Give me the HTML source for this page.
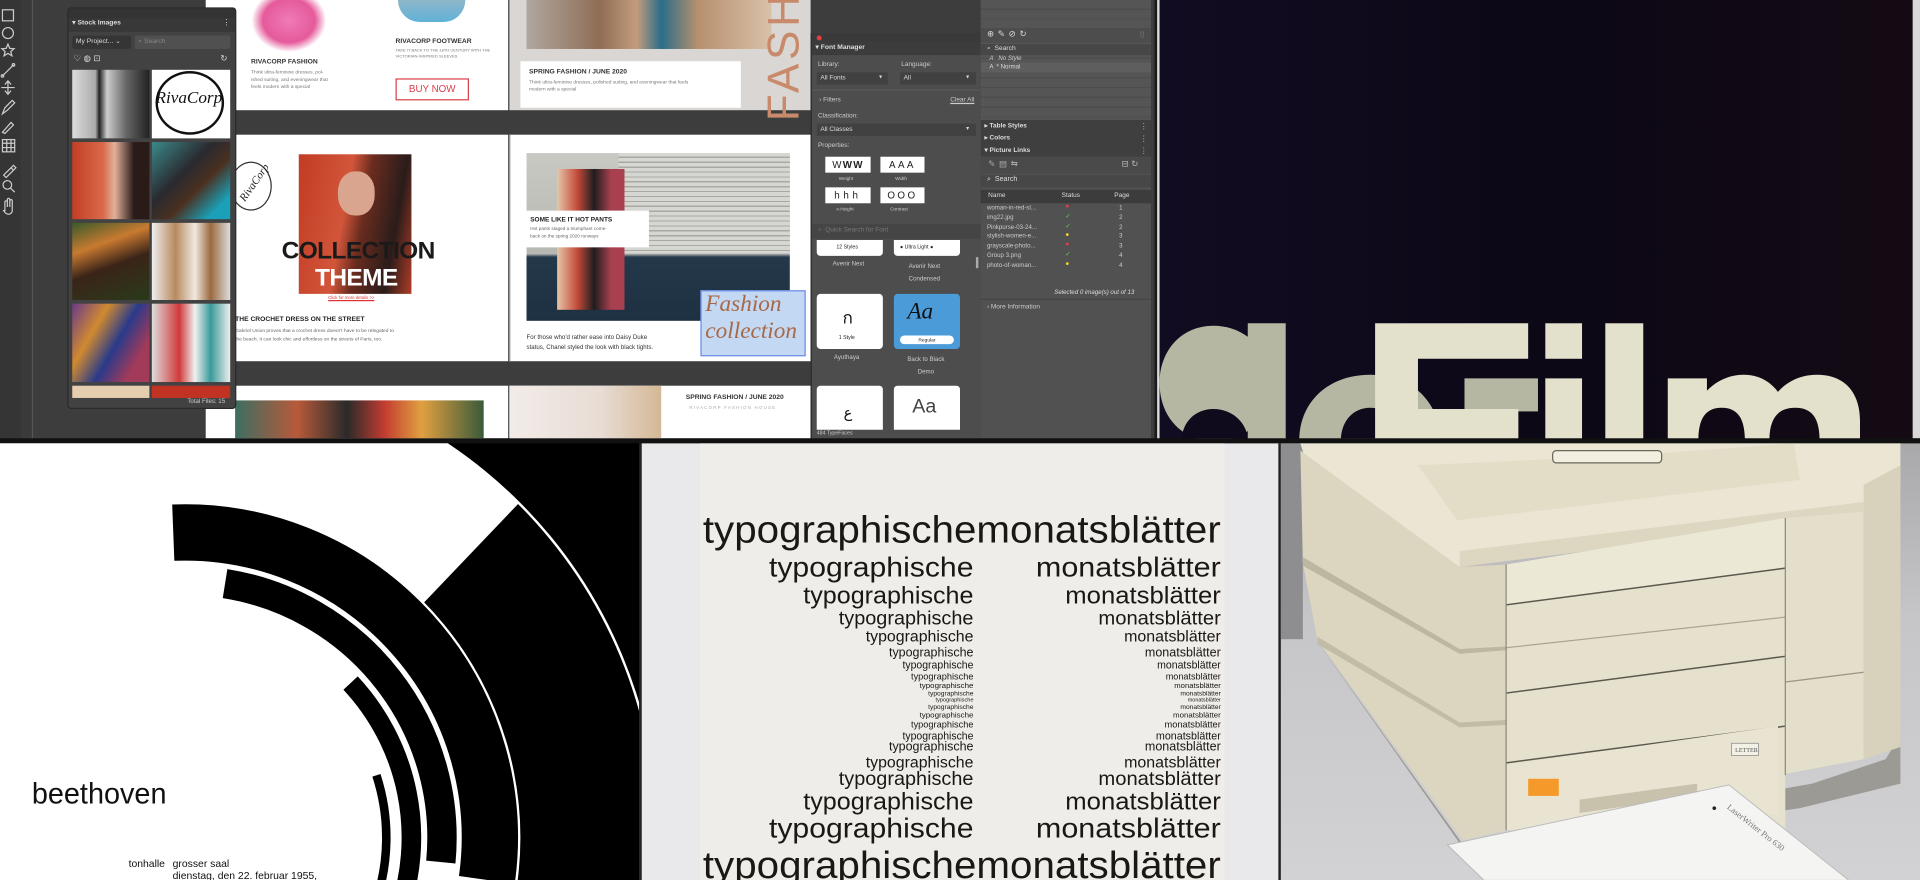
<!DOCTYPE html>
<html><head><meta charset="utf-8">
<style>
html,body{margin:0;padding:0;width:1920px;height:880px;overflow:hidden;background:#121212;}
.s{position:absolute;left:0;top:0;width:1568px;height:719px;overflow:hidden;transform:scale(1.22449);transform-origin:0 0;font-family:"Liberation Sans",sans-serif;}
.a{position:absolute;}
.t{position:absolute;white-space:nowrap;}
.w{color:#ddd;}
</style></head><body>
<div class="s">
<!-- ===== TOP LEFT APP ===== -->
<div class="a" style="left:0;top:0;width:943px;height:358px;background:#3d3d3d;overflow:hidden">
  <div class="a" style="left:0;top:0;width:17px;height:358px;background:#353535"></div>
  <div class="a" style="left:17px;top:0;width:9px;height:358px;background:#3a3a3a;border-right:1px solid #555"></div>
  <svg class="a" style="left:0;top:0" width="26" height="180" fill="none" stroke="#ccc" stroke-width="1">
    <rect x="2" y="8" width="9" height="9"/>
    <circle cx="6.5" cy="27" r="4.5"/>
    <path d="M6.5 36l1.5 3.5 3.5.3-2.7 2.3.9 3.5-3.2-2-3.2 2 .9-3.5-2.7-2.3 3.5-.3z"/>
    <path d="M2 62l9-9"/><circle cx="2" cy="62" r="1"/><circle cx="11" cy="53" r="1"/>
    <path d="M6.5 66v11M1 71.5h11M4 69l2.5-3 2.5 3M4 74l2.5 3 2.5-3"/>
    <path d="M2 93l2-5 6-6 2 2-6 6z"/>
    <path d="M2 108l7-8 2 2-7 7z"/>
    <rect x="2" y="114" width="10" height="10"/><path d="M2 117h10M2 120.5h10M5.5 114v10M9 114v10"/>
    <path d="M3 143l6-6 2 2-6 6zM9 137l2-2 2 2-2 2"/>
    <circle cx="6" cy="151" r="3.5"/><path d="M8.5 153.5l3.5 3.5"/>
    <path d="M4 172v-7a1 1 0 012 0v4-6a1 1 0 012 0v6-5a1 1 0 012 0v8c0 2-2 3-3 3s-3-1-4-3z"/>
  </svg>
  <div class="a" style="left:168px;top:0;width:247px;height:90px;background:#fff"></div>
  <div class="a" style="left:416px;top:0;width:246px;height:90px;background:#d9d6d3"></div>
  <div class="a" style="left:206px;top:0;width:60px;height:42px;background:radial-gradient(ellipse at 50% 40%,#f07ab8,#e55a9a 50%,#fff 72%)"></div>
  <div class="a" style="left:325px;top:0;width:55px;height:18px;background:linear-gradient(#8fb6c9,#5fb2d8);border-radius:0 0 20px 20px"></div>
  <div class="t" style="left:205px;top:48px;font-size:5.5px;color:#333;font-weight:bold">RIVACORP FASHION</div>
  <div class="t" style="left:205px;top:56px;font-size:4px;color:#777;line-height:6px">Think ultra-feminine dresses, pol-<br>ished suiting, and eveningwear that<br>feels modern with a special</div>
  <div class="t" style="left:323px;top:31px;font-size:5.5px;color:#333;font-weight:bold">RIVACORP FOOTWEAR</div>
  <div class="t" style="left:323px;top:39px;font-size:3.3px;color:#777;line-height:4.5px">TAKE IT BACK TO THE 18TH CENTURY WITH THE<br>VICTORIAN-INSPIRED SLEEVES</div>
  <div class="a" style="left:323px;top:64px;width:58px;height:16px;border:1.3px solid #d9404a;color:#d9404a;font-size:8px;text-align:center;line-height:16px">BUY NOW</div>
  <div class="a" style="left:430px;top:0;width:200px;height:40px;background:linear-gradient(90deg,#b0a79f,#8f6d55 30%,#c49c7c 45%,#2a6d8a 55%,#b7906d 70%,#d8c2aa)"></div>
  <div class="a" style="left:425px;top:50px;width:180px;height:38px;background:#fff"></div>
  <div class="t" style="left:432px;top:56px;font-size:5.5px;color:#333;font-weight:bold">SPRING FASHION / JUNE 2020</div>
  <div class="t" style="left:432px;top:64px;font-size:4px;color:#777;line-height:6px">Think ultra-feminine dresses, polished suiting, and eveningwear that feels<br>modern with a special</div>
  <div class="t" style="left:640px;top:46px;font-size:36px;color:#c88a6a;transform:translate(-50%,-50%) rotate(-90deg);letter-spacing:3px;font-weight:300">FASH</div>
  <div class="a" style="left:168px;top:110px;width:247px;height:185px;background:#fff"></div>
  <div class="a" style="left:416px;top:110px;width:246px;height:185px;background:#fff;border-left:1px solid #bbb"></div>
  <div class="a" style="left:188px;top:132px;width:32px;height:38px;border:1.5px solid #333;border-radius:50%"></div>
  <div class="t" style="left:190px;top:144px;font-size:9px;font-style:italic;font-family:'Liberation Serif',serif;transform:rotate(-55deg);color:#222">RivaCorp</div>
  <div class="a" style="left:244px;top:126px;width:92px;height:114px;background:linear-gradient(100deg,#c13c24,#d2553a 40%,#6a2c1f 55%,#2a1c1a 80%,#b03c28)"></div>
  <div class="a" style="left:276px;top:140px;width:30px;height:36px;background:#d9a58e;border-radius:45%"></div>
  <div class="t" style="left:230px;top:194px;width:122px;text-align:center;font-size:20px;font-weight:bold;color:#1a1a1a;letter-spacing:-.5px">COLLECTION</div>
  <div class="t" style="left:230px;top:216px;width:122px;text-align:center;font-size:20px;font-weight:bold;color:#fff;letter-spacing:-.5px">THEME</div>
  <div class="t" style="left:268px;top:241px;font-size:3.5px;color:#d33;text-decoration:underline">Click for more details &gt;&gt;</div>
  <div class="t" style="left:192px;top:258px;font-size:5.5px;color:#222;font-weight:bold">THE CROCHET DRESS ON THE STREET</div>
  <div class="t" style="left:192px;top:266px;font-size:4px;color:#666;line-height:7px">Gabriel Union proves that a crochet dress doesn't have to be relegated to<br>the beach. It can look chic and effortless on the streets of Paris, too.</div>
  <div class="a" style="left:430px;top:125px;width:215px;height:137px;background:linear-gradient(180deg,#c9c9c4 0,#b8b8b2 60%,#23384a 62%,#1e3142 100%)"></div>
  <div class="a" style="left:505px;top:125px;width:140px;height:82px;background:repeating-linear-gradient(180deg,#d6d6d2 0 3px,#a9a9a4 3px 4px)"></div>
  <div class="a" style="left:455px;top:138px;width:55px;height:115px;background:linear-gradient(90deg,#e6c6a8,#c44a3a 30%,#1e1e1e 55%,#a84050 80%)"></div>
  <div class="a" style="left:430px;top:172px;width:100px;height:30px;background:#fff"></div>
  <div class="t" style="left:433px;top:177px;font-size:5.3px;color:#222;font-weight:bold">SOME LIKE IT HOT PANTS</div>
  <div class="t" style="left:433px;top:184px;font-size:3.8px;color:#666;line-height:6px">Hot pants staged a triumphant come-<br>back on the spring 2020 runways</div>
  <div class="a" style="left:572px;top:237px;width:84px;height:52px;background:#c3d8f3;border:1px solid #6b8ce8"></div>
  <div class="t" style="left:576px;top:238px;font-size:19px;font-style:italic;font-family:'Liberation Serif',serif;color:#a86848;line-height:22px">Fashion<br>collection</div>
  <div class="t" style="left:430px;top:272px;font-size:5px;color:#333;line-height:8px">For those who'd rather ease into Daisy Duke<br>status, Chanel styled the look with black tights.</div>
  <div class="a" style="left:168px;top:315px;width:247px;height:43px;background:#fff"></div>
  <div class="a" style="left:416px;top:315px;width:246px;height:43px;background:#fff"></div>
  <div class="a" style="left:192px;top:327px;width:203px;height:31px;background:linear-gradient(90deg,#3c6e62,#b85a3a 25%,#2a2a2a 45%,#c23c30 60%,#e0a040 75%,#3a5a3a)"></div>
  <div class="a" style="left:416px;top:315px;width:124px;height:43px;background:linear-gradient(90deg,#f2ece8,#e8dcd4 60%,#d4b896)"></div>
  <div class="t" style="left:560px;top:322px;font-size:5.5px;color:#333;font-weight:bold">SPRING FASHION / JUNE 2020</div>
  <div class="t" style="left:563px;top:331px;font-size:3.6px;color:#aaa;letter-spacing:1px">RIVACORP FASHION HOUSE</div>
  <div class="a" style="left:55px;top:6px;width:136px;height:326px;background:#424242;border:1px solid #2a2a2a;border-radius:3px;overflow:hidden">
    <div class="a" style="left:0;top:0;width:136px;height:8px;background:#333"></div>
    <div class="a" style="left:0;top:8px;width:136px;height:11px;background:#383838"></div>
    <div class="t w" style="left:3px;top:9px;font-size:5.5px;font-weight:bold">▾ Stock Images</div>
    <div class="t w" style="left:126px;top:8px;font-size:6px">⋮</div>
    <div class="a" style="left:3px;top:22px;width:48px;height:11px;background:#353535;border-radius:2px"></div>
    <div class="t w" style="left:6px;top:24px;font-size:5.5px">My Project... ⌄</div>
    <div class="a" style="left:54px;top:22px;width:78px;height:11px;background:#505050;border-radius:2px"></div>
    <div class="t" style="left:57px;top:24px;font-size:5.5px;color:#888">⌕ Search</div>
    <div class="t w" style="left:4px;top:37px;font-size:7px">♡ ◍ ⊡</div>
    <div class="t w" style="left:124px;top:37px;font-size:7px">↻</div>
    <div class="a" style="left:3px;top:50px;width:63px;height:56px;background:linear-gradient(90deg,#ddd,#aaa 30%,#222 35%,#ccc 45%,#666 70%,#222)"></div>
    <div class="a" style="left:68px;top:50px;width:64px;height:56px;background:#fff"></div>
    <div class="a" style="left:71px;top:51px;width:56px;height:52px;border:2px solid #111;border-radius:50%;box-sizing:border-box"></div>
    <div class="t" style="left:71px;top:66px;font-size:14px;font-style:italic;font-family:'Liberation Serif',serif;color:#111">RivaCorp</div>
    <div class="a" style="left:3px;top:109px;width:63px;height:63px;background:linear-gradient(90deg,#c33e26,#d96a4a 40%,#e2b09a 55%,#2a1a18 80%)"></div>
    <div class="a" style="left:68px;top:109px;width:64px;height:63px;background:linear-gradient(135deg,#3a8a8a,#2a2a30 40%,#4a3020 60%,#1aa0b8 85%)"></div>
    <div class="a" style="left:3px;top:175px;width:63px;height:63px;background:linear-gradient(160deg,#3a5a2a,#c87a30 30%,#3a2418 55%,#2a3a1a)"></div>
    <div class="a" style="left:68px;top:175px;width:64px;height:63px;background:linear-gradient(90deg,#eee,#b88a60 30%,#f0e8e0 55%,#9a6a40 75%,#ddd)"></div>
    <div class="a" style="left:3px;top:241px;width:63px;height:64px;background:linear-gradient(120deg,#6a3a8a,#d08a30 30%,#2a3a8a 55%,#a23a5a 80%)"></div>
    <div class="a" style="left:68px;top:241px;width:64px;height:64px;background:linear-gradient(90deg,#ddd,#d03a3a 35%,#f0f0f0 55%,#3a9a9a 75%,#eee)"></div>
    <div class="a" style="left:3px;top:308px;width:63px;height:10px;background:#e6cdb0"></div>
    <div class="a" style="left:68px;top:308px;width:64px;height:10px;background:#c23222"></div>
    <div class="t" style="left:97px;top:318px;font-size:5px;color:#ccc">Total Files: 15</div>
  </div>
  <div class="a" style="left:662px;top:27px;width:138px;height:331px;background:#4d4d4d;border-left:1px solid #2a2a2a">
    <div class="a" style="left:0;top:0;width:138px;height:8px;background:#3a3a3a"></div>
    <div class="a" style="left:4px;top:2px;width:4px;height:4px;border-radius:50%;background:#e04040"></div>
    <div class="a" style="left:0;top:8px;width:138px;height:10px;background:#3c3c3c"></div>
    <div class="t w" style="left:3px;top:9px;font-size:5.5px;font-weight:bold">▾ Font Manager</div>
    <div class="t" style="left:5px;top:23px;font-size:5.3px;color:#ccc">Library:</div>
    <div class="t" style="left:73px;top:23px;font-size:5.3px;color:#ccc">Language:</div>
    <div class="a" style="left:4px;top:32px;width:58px;height:10px;background:#414141"></div>
    <div class="t" style="left:7px;top:34px;font-size:5.3px;color:#ddd">All Fonts</div><div class="t" style="left:55px;top:33px;font-size:5px;color:#ddd">▾</div>
    <div class="a" style="left:72px;top:32px;width:62px;height:10px;background:#414141"></div>
    <div class="t" style="left:75px;top:34px;font-size:5.3px;color:#ddd">All</div><div class="t" style="left:126px;top:33px;font-size:5px;color:#ddd">▾</div>
    <div class="a" style="left:0;top:46px;width:138px;height:1px;background:#5a5a5a"></div>
    <div class="t" style="left:6px;top:52px;font-size:5.3px;color:#ccc">› Filters</div>
    <div class="t" style="left:113px;top:52px;font-size:5.3px;color:#ccc;text-decoration:underline">Clear All</div>
    <div class="t" style="left:5px;top:65px;font-size:5.3px;color:#ccc">Classification:</div>
    <div class="a" style="left:4px;top:74px;width:130px;height:10px;background:#414141"></div>
    <div class="t" style="left:7px;top:76px;font-size:5.3px;color:#ddd">All Classes</div><div class="t" style="left:126px;top:75px;font-size:5px;color:#ddd">▾</div>
    <div class="t" style="left:5px;top:89px;font-size:5.3px;color:#ccc">Properties:</div>
    <div class="a" style="left:11px;top:101px;width:37px;height:13px;background:#fff;font-size:8px;line-height:13px;text-align:center;letter-spacing:1px;color:#222">W<b>W</b><b>W</b></div>
    <div class="a" style="left:56px;top:101px;width:36px;height:13px;background:#fff;font-size:8px;line-height:13px;text-align:center;letter-spacing:2px;color:#222">AAA</div>
    <div class="t" style="left:22px;top:117px;font-size:3.8px;color:#ccc">Weight</div>
    <div class="t" style="left:68px;top:117px;font-size:3.8px;color:#ccc">Width</div>
    <div class="a" style="left:11px;top:126px;width:37px;height:13px;background:#fff;font-size:8px;line-height:13px;text-align:center;letter-spacing:3px;color:#222">hhh</div>
    <div class="a" style="left:56px;top:126px;width:36px;height:13px;background:#fff;font-size:8px;line-height:13px;text-align:center;letter-spacing:2px;color:#222">OOO</div>
    <div class="t" style="left:20px;top:142px;font-size:3.8px;color:#ccc">x-Height</div>
    <div class="t" style="left:64px;top:142px;font-size:3.8px;color:#ccc">Contrast</div>
    <div class="a" style="left:0;top:156px;width:138px;height:12px;background:#454545"></div>
    <div class="t" style="left:5px;top:158px;font-size:5.3px;color:#777">⌕ &nbsp;Quick Search for Font</div>
    <div class="a" style="left:4px;top:169px;width:54px;height:13px;background:#fff;border-radius:0 0 3px 3px"></div>
    <div class="t" style="left:20px;top:172px;font-size:4.3px;color:#222">12 Styles</div>
    <div class="a" style="left:67px;top:169px;width:54px;height:13px;background:#fff;border-radius:0 0 3px 3px"></div>
    <div class="t" style="left:72px;top:172px;font-size:4.3px;color:#222">● Ultra Light ●</div>
    <div class="t" style="left:17px;top:186px;font-size:5px;color:#ccc">Avenir Next</div>
    <div class="t" style="left:79px;top:186px;font-size:5px;color:#ccc;text-align:center;line-height:10px">Avenir Next<br>Condensed</div>
    <div class="a" style="left:134px;top:183px;width:2px;height:9px;background:#aaa"></div>
    <div class="a" style="left:4px;top:213px;width:54px;height:45px;background:#fff;border-radius:3px"></div>
    <div class="t" style="left:25px;top:222px;font-size:14px;color:#111">ก</div>
    <div class="t" style="left:22px;top:246px;font-size:4.3px;color:#222">1 Style</div>
    <div class="a" style="left:67px;top:213px;width:54px;height:45px;background:#4b9bd8;border-radius:3px"></div>
    <div class="t" style="left:78px;top:217px;font-size:19px;font-style:italic;font-family:'Liberation Serif',serif;color:#111">Aa</div>
    <div class="a" style="left:72px;top:247px;width:44px;height:7px;background:#fff;border-radius:4px;font-size:4px;text-align:center;line-height:7px;color:#222">Regular</div>
    <div class="t" style="left:18px;top:262px;font-size:5px;color:#ccc">Ayuthaya</div>
    <div class="t" style="left:78px;top:262px;font-size:5px;color:#ccc;text-align:center;line-height:10px">Back to Black<br>Demo</div>
    <div class="a" style="left:4px;top:288px;width:54px;height:36px;background:#fff;border-radius:3px 3px 0 0"></div>
    <div class="t" style="left:26px;top:303px;font-size:12px;color:#111">ع</div>
    <div class="a" style="left:67px;top:288px;width:54px;height:36px;background:#fff;border-radius:3px 3px 0 0"></div>
    <div class="t" style="left:82px;top:297px;font-size:16px;color:#444">Aa</div>
    <div class="t" style="left:4px;top:324px;font-size:4.3px;color:#ccc">484 TypeFaces</div>
  </div>
  <div class="a" style="left:801px;top:0;width:139px;height:358px;background:#515151">
    <div class="a" style="left:0;top:0;width:139px;height:98px;background:repeating-linear-gradient(180deg,#555 0 7px,#4d4d4d 7px 8px)"></div>
    <div class="a" style="left:0;top:24px;width:139px;height:11px;background:#4d4d4d"></div>
    <div class="t w" style="left:5px;top:24px;font-size:7px;letter-spacing:3px">⊕✎⊘↻</div>
    <div class="t" style="left:130px;top:25px;font-size:6px;color:#888">▯</div>
    <div class="a" style="left:0;top:36px;width:139px;height:9px;background:#474747"></div>
    <div class="t w" style="left:5px;top:37px;font-size:5.5px">⌕ &nbsp;Search</div>
    <div class="t" style="left:7px;top:45px;font-size:5px;color:#ccc;font-style:italic">A &nbsp;&nbsp;No Style</div>
    <div class="a" style="left:0;top:51px;width:139px;height:8px;background:#5e5e5e"></div>
    <div class="t" style="left:7px;top:52px;font-size:5px;color:#ddd">A &nbsp;* Normal</div>
    <div class="a" style="left:0;top:98px;width:139px;height:30px;background:#3f3f3f"></div>
    <div class="t w" style="left:3px;top:100px;font-size:5.3px;font-weight:bold">▸ Table Styles</div>
    <div class="t w" style="left:3px;top:110px;font-size:5.3px;font-weight:bold">▸ Colors</div>
    <div class="t w" style="left:3px;top:120px;font-size:5.3px;font-weight:bold">▾ Picture Links</div>
    <div class="t" style="left:130px;top:99px;font-size:6px;color:#bbb;line-height:10px">⋮<br>⋮<br>⋮</div>
    <div class="a" style="left:0;top:128px;width:139px;height:14px;background:#4a4a4a"></div>
    <div class="t" style="left:6px;top:130px;font-size:7px;color:#aaa;letter-spacing:3px">✎▤⇆</div>
    <div class="t" style="left:115px;top:130px;font-size:7px;color:#bbb">⊟ ↻</div>
    <div class="a" style="left:0;top:143px;width:139px;height:10px;background:#474747"></div>
    <div class="t w" style="left:5px;top:144px;font-size:5.8px">⌕ &nbsp;Search</div>
    <div class="a" style="left:0;top:155px;width:139px;height:11px;background:#3c3c3c"></div>
    <div class="t w" style="left:6px;top:157px;font-size:5.3px">Name</div>
    <div class="t w" style="left:66px;top:157px;font-size:5.3px">Status</div>
    <div class="t w" style="left:109px;top:157px;font-size:5.3px">Page</div>
    <div class="t" style="left:5px;top:167px;font-size:5px;color:#ccc;line-height:7.8px">woman-in-red-sl...<br>img22.jpg<br>Pinkpurse-03-24...<br>stylish-women-e...<br>grayscale-photo...<br>Group 3.png<br>photo-of-woman...</div>
    <div class="t" style="left:113px;top:167px;font-size:5px;color:#ccc;line-height:7.8px">1<br>2<br>2<br>3<br>3<br>4<br>4</div>
    <div class="t" style="left:69px;top:166px;font-size:5.5px;line-height:7.8px"><span style="color:#e04040">●</span><br><span style="color:#6c6">✓</span><br><span style="color:#6c6">✓</span><br><span style="color:#ec3">●</span><br><span style="color:#e04040">●</span><br><span style="color:#6c6">✓</span><br><span style="color:#ec3">●</span></div>
    <div class="t" style="left:60px;top:236px;font-size:5px;color:#ddd;font-style:italic">Selected 0 image(s) out of 13</div>
    <div class="a" style="left:0;top:244px;width:139px;height:1px;background:#444"></div>
    <div class="t" style="left:5px;top:248px;font-size:5.3px;color:#ccc">› More Information</div>
  </div>
</div>
<div class="a" style="left:943px;top:0;width:4px;height:358px;background:#1a1a1a"></div>
<div class="a" style="left:945px;top:0;width:2px;height:358px;background:#ddd"></div>
<svg class="a" style="left:947px;top:0" width="621" height="358">
  <defs><linearGradient id="fg" x1="0" x2="1"><stop offset="0" stop-color="#120c22"/><stop offset=".5" stop-color="#0c0816"/><stop offset="1" stop-color="#140a14"/></linearGradient></defs>
  <rect width="621" height="358" fill="url(#fg)"/>
  <g transform="translate(-947,0)">
    <path d="M1019 264h31v96h-31v-8c-8 6-18 8-28 8-26 0-44-20-44-47s18-47 44-47c10 0 20 3 28 9z" fill="#b5b7a3"/>
    <path d="M991 334c-16 0-26 12-26 26h54c0-14-12-26-28-26z" fill="#0f0a1c"/>
    <path d="M1061 360c0-32 24-54 58-54s57 22 57 54z" fill="#b5b7a3"/>
    <path d="M1095 360c0-16 10-27 24-27s24 11 24 27z" fill="#0f0a1c"/>
    <rect x="1196" y="309" width="60" height="27" fill="#b5b7a3"/>
    <path d="M1123 264h125v29h-90v41h82v26h-117z" fill="#e3e0cc"/>
    <rect x="1262" y="264" width="30" height="29" fill="#e3e0cc"/>
    <rect x="1262" y="309" width="30" height="51" fill="#e3e0cc"/>
    <rect x="1311" y="264" width="31" height="96" fill="#e3e0cc"/>
    <path d="M1362 309h32v10c8-8 18-13 30-13 13 0 22 6 28 14 8-9 19-14 32-14 22 0 35 14 35 38v16h-33c0-17-5-27-20-27s-21 10-21 27h-20c0-17-5-27-19-27s-19 10-19 27h-25z" fill="#e3e0cc"/>
  </g>
  <rect x="615" y="0" width="6" height="358" fill="#d8d8d8"/>
</svg>
<div class="a" style="left:0;top:358px;width:1568px;height:4px;background:#111"></div>
<svg class="a" style="left:0;top:362px" width="524" height="357">
  <defs>
    <clipPath id="bc"><rect width="522" height="357"/></clipPath>
    <clipPath id="dg"><polygon points="480,-10 290,189 400,440 700,440 700,-10"/></clipPath>
  </defs>
  <g clip-path="url(#bc)">
    <rect width="522" height="357" fill="#000"/>
    <circle cx="151" cy="322" r="387" fill="#fff"/>
    <circle cx="151" cy="322" r="385" fill="#000" clip-path="url(#dg)"/>
    <circle cx="151" cy="322" r="274" fill="#fff"/>
    <g transform="translate(151,322)" fill="none" stroke="#000">
      <path d="M-9.5 -249 A249 249 0 0 1 246.6 34.6" stroke-width="46"/>
      <path d="M32.8 -207.4 A210 210 0 0 1 209 20" stroke-width="24"/>
      <path d="M135.3 -126.2 A185 185 0 0 1 173.8 63.3" stroke-width="16"/>
      <path d="M156.4 -50.8 A164.5 164.5 0 0 1 154.6 56.3" stroke-width="7"/>
    </g>
  </g>
  <text x="26" y="294" font-family="Liberation Sans" font-size="24.5" fill="#111" textLength="110" lengthAdjust="spacingAndGlyphs">beethoven</text>
  <text x="105" y="346" font-family="Liberation Sans" font-size="8.5" fill="#111">tonhalle</text>
  <text x="141" y="346" font-family="Liberation Sans" font-size="8.5" fill="#111">grosser saal</text>
  <text x="141" y="356" font-family="Liberation Sans" font-size="8.5" fill="#111">dienstag, den 22. februar 1955,</text>
  <rect x="522" y="0" width="2" height="357" fill="#222"/>
</svg>
<svg class="a" style="left:524px;top:362px" width="522" height="357" font-family="Liberation Sans" fill="#1b1714">
  <rect width="522" height="357" fill="#e9e9eb"/>
  <rect x="48" y="0" width="428" height="357" fill="#efede9"/>
  <text x="50" y="81" font-size="31" textLength="423" lengthAdjust="spacingAndGlyphs">typographischemonatsblätter</text>
  <g text-anchor="end">
    <text x="271" y="109" font-size="23" textLength="167" lengthAdjust="spacingAndGlyphs">typographische</text><text x="473" y="109" font-size="23" textLength="151" lengthAdjust="spacingAndGlyphs">monatsblätter</text>
    <text x="271" y="131" font-size="19.5" textLength="139" lengthAdjust="spacingAndGlyphs">typographische</text><text x="473" y="131" font-size="19.5" textLength="127" lengthAdjust="spacingAndGlyphs">monatsblätter</text>
    <text x="271" y="148" font-size="16" textLength="110" lengthAdjust="spacingAndGlyphs">typographische</text><text x="473" y="148" font-size="16" textLength="100" lengthAdjust="spacingAndGlyphs">monatsblätter</text>
    <text x="271" y="162" font-size="13" textLength="88" lengthAdjust="spacingAndGlyphs">typographische</text><text x="473" y="162" font-size="13" textLength="79" lengthAdjust="spacingAndGlyphs">monatsblätter</text>
    <text x="271" y="174" font-size="10.5" textLength="69" lengthAdjust="spacingAndGlyphs">typographische</text><text x="473" y="174" font-size="10.5" textLength="62" lengthAdjust="spacingAndGlyphs">monatsblätter</text>
    <text x="271" y="184" font-size="9" textLength="58" lengthAdjust="spacingAndGlyphs">typographische</text><text x="473" y="184" font-size="9" textLength="52" lengthAdjust="spacingAndGlyphs">monatsblätter</text>
    <text x="271" y="193" font-size="7.5" textLength="51" lengthAdjust="spacingAndGlyphs">typographische</text><text x="473" y="193" font-size="7.5" textLength="45" lengthAdjust="spacingAndGlyphs">monatsblätter</text>
    <text x="271" y="200" font-size="6" textLength="44" lengthAdjust="spacingAndGlyphs">typographische</text><text x="473" y="200" font-size="6" textLength="38" lengthAdjust="spacingAndGlyphs">monatsblätter</text>
    <text x="271" y="206" font-size="5" textLength="37" lengthAdjust="spacingAndGlyphs">typographische</text><text x="473" y="206" font-size="5" textLength="33" lengthAdjust="spacingAndGlyphs">monatsblätter</text>
    <text x="271" y="211" font-size="4.3" textLength="31" lengthAdjust="spacingAndGlyphs">typographische</text><text x="473" y="211" font-size="4.3" textLength="27" lengthAdjust="spacingAndGlyphs">monatsblätter</text>
    <text x="271" y="217" font-size="5" textLength="37" lengthAdjust="spacingAndGlyphs">typographische</text><text x="473" y="217" font-size="5" textLength="33" lengthAdjust="spacingAndGlyphs">monatsblätter</text>
    <text x="271" y="224" font-size="6" textLength="44" lengthAdjust="spacingAndGlyphs">typographische</text><text x="473" y="224" font-size="6" textLength="39" lengthAdjust="spacingAndGlyphs">monatsblätter</text>
    <text x="271" y="232" font-size="7.5" textLength="51" lengthAdjust="spacingAndGlyphs">typographische</text><text x="473" y="232" font-size="7.5" textLength="46" lengthAdjust="spacingAndGlyphs">monatsblätter</text>
    <text x="271" y="242" font-size="9" textLength="58" lengthAdjust="spacingAndGlyphs">typographische</text><text x="473" y="242" font-size="9" textLength="53" lengthAdjust="spacingAndGlyphs">monatsblätter</text>
    <text x="271" y="251" font-size="10.5" textLength="69" lengthAdjust="spacingAndGlyphs">typographische</text><text x="473" y="251" font-size="10.5" textLength="62" lengthAdjust="spacingAndGlyphs">monatsblätter</text>
    <text x="271" y="265" font-size="13" textLength="88" lengthAdjust="spacingAndGlyphs">typographische</text><text x="473" y="265" font-size="13" textLength="79" lengthAdjust="spacingAndGlyphs">monatsblätter</text>
    <text x="271" y="279" font-size="16" textLength="110" lengthAdjust="spacingAndGlyphs">typographische</text><text x="473" y="279" font-size="16" textLength="100" lengthAdjust="spacingAndGlyphs">monatsblätter</text>
    <text x="271" y="299" font-size="19.5" textLength="139" lengthAdjust="spacingAndGlyphs">typographische</text><text x="473" y="299" font-size="19.5" textLength="127" lengthAdjust="spacingAndGlyphs">monatsblätter</text>
    <text x="271" y="322" font-size="23" textLength="167" lengthAdjust="spacingAndGlyphs">typographische</text><text x="473" y="322" font-size="23" textLength="151" lengthAdjust="spacingAndGlyphs">monatsblätter</text>
  </g>
  <text x="50" y="355" font-size="31" textLength="423" lengthAdjust="spacingAndGlyphs">typographischemonatsblätter</text>
  <rect x="520" y="0" width="2" height="357" fill="#222"/>
</svg>
<svg class="a" style="left:1046px;top:362px" width="522" height="357">
  <defs><linearGradient id="fl" x1="0" y1="0" x2="0" y2="1"><stop offset="0" stop-color="#a9a9ab"/><stop offset=".4" stop-color="#c6c6c8"/><stop offset="1" stop-color="#d2d2d4"/></linearGradient></defs>
  <g transform="translate(-1046,-362)">
    <rect x="1046" y="362" width="522" height="357" fill="url(#fl)"/>
    <rect x="1046" y="362" width="18" height="160" fill="#8e8e90"/>
    <polygon points="1075,523 1195,690 1480,640 1540,620 1552,600 1552,640 1470,660 1200,700" fill="#9c9a94"/>
    <polygon points="1062,362 1552,362 1552,396 1522,418 1192,463 1065,372" fill="#ebe6d4"/>
    <polygon points="1158,380 1330,372 1465,362 1470,392 1190,425" fill="#e3ddc8"/>
    <rect x="1268" y="368" width="89" height="10" rx="3" fill="#f2eee0" stroke="#6a665a" stroke-width="1"/>
    <polygon points="1192,450 1522,410 1522,422 1192,463" fill="#ddd7c2"/>
    <polygon points="1062,368 1192,463 1230,461 1230,678 1195,686 1076,523 1064,460" fill="#dcd6c0"/>
    <polygon points="1064,455 1192,530 1230,528 1230,531 1192,534 1064,462" fill="#bdb7a2"/>
    <polygon points="1076,520 1192,590 1230,588 1230,592 1192,594 1076,526" fill="#c2bca6"/>
    <rect x="1230" y="461" width="228" height="217" fill="#e6e1cd"/>
    <polygon points="1230,461 1458,423 1458,463 1230,495" fill="#ece8d6"/>
    <path d="M1230 494l228-30M1230 566l228-30M1230 623l228-30" stroke="#5b584e" stroke-width="1.2"/>
    <path d="M1230 529l228-25" stroke="#aaa592" stroke-width="1"/>
    <polygon points="1230,625 1452,593 1452,665 1230,678" fill="#e9e4d1"/>
    <polygon points="1290,653 1386,640 1386,650 1290,664" fill="#c8c2ad"/>
    <rect x="1414" y="607" width="22" height="10" fill="#f3f0e4" stroke="#888" stroke-width=".6"/>
    <text x="1417" y="614" font-family="Liberation Serif" font-size="5" fill="#555">LETTER</text>
    <rect x="1248" y="636" width="25" height="14" fill="#f59a2a"/>
    <polygon points="1458,423 1522,418 1522,620 1458,632" fill="#e4dfca"/>
    <path d="M1458 557l64-8" stroke="#9a9584" stroke-width="1"/>
    <polygon points="1522,396 1552,380 1552,610 1522,620" fill="#d8d2bd"/>
    <path d="M1230 461v217M1458 423v210" stroke="#8d8878" stroke-width="1"/>
    <polygon points="1182,690 1412,641 1510,719 1212,719" fill="#f4f4f2" stroke="#bbb" stroke-width=".8"/>
    <text x="1410" y="660" font-family="Liberation Serif" font-size="7" fill="#777" transform="rotate(38 1410 660)">LaserWriter Pro 630</text>
    <circle cx="1400" cy="660" r="1.5" fill="#222"/>
  </g>
</svg>
</div>
</body></html>
